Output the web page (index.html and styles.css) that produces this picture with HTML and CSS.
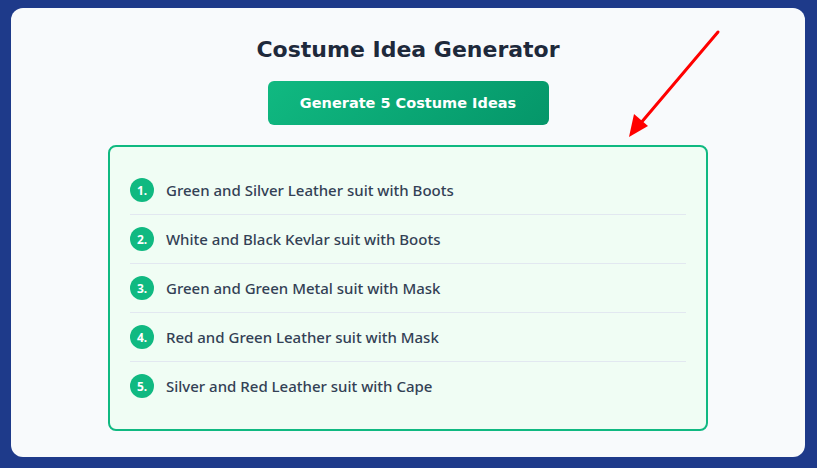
FILE: index.html
```html
<!DOCTYPE html>
<html lang="en">
<head>
<meta charset="utf-8">
<title>Costume Idea Generator</title>
<link rel="stylesheet" href="styles.css">
</head>
<body>
<main class="card">
  <h1 class="title">Costume Idea Generator</h1>
  <button class="generate">Generate 5 Costume Ideas</button>
  <ol class="ideas">
    <li class="idea"><span class="num">1.</span><span class="text">Green and Silver Leather suit with Boots</span></li>
    <li class="idea"><span class="num">2.</span><span class="text">White and Black Kevlar suit with Boots</span></li>
    <li class="idea"><span class="num">3.</span><span class="text">Green and Green Metal suit with Mask</span></li>
    <li class="idea"><span class="num">4.</span><span class="text">Red and Green Leather suit with Mask</span></li>
    <li class="idea"><span class="num">5.</span><span class="text">Silver and Red Leather suit with Cape</span></li>
  </ol>
</main>
<svg class="arrow" width="817" height="468" viewBox="0 0 817 468" aria-hidden="true">
  <line x1="718" y1="32" x2="640" y2="124" stroke="#ff0000" stroke-width="3" stroke-linecap="round"/>
  <polygon points="629,137 634,114 648,126" fill="#ff0000"/>
</svg>
</body>
</html>
```
FILE: styles.css
```css
html, body {
  margin: 0;
  padding: 0;
}
body {
  background: #1e3a8a;
  padding: 8px 12px 11px 11px;
  width: 817px;
  height: 468px;
  box-sizing: border-box;
  position: relative;
  overflow: hidden;
}
.card {
  background: #f8fafc;
  border-radius: 12px;
  height: 449px;
  box-sizing: border-box;
  padding: 24px 0 0;
  display: flex;
  flex-direction: column;
  align-items: center;
}
.title {
  margin: 0;
  font-family: "DejaVu Sans", sans-serif;
  font-weight: 700;
  font-size: 22px;
  line-height: 36px;
  color: #1e293b;
}
.generate {
  margin-top: 13px;
  width: 281px;
  height: 44px;
  border: none;
  border-radius: 6px;
  background: linear-gradient(135deg, #10b981, #059669);
  color: #ffffff;
  font-family: "DejaVu Sans", sans-serif;
  font-weight: 700;
  font-size: 14.5px;
  padding: 0;
}
.ideas {
  list-style: none;
  margin: 20px 0 0;
  width: 600px;
  box-sizing: border-box;
  border: 2px solid #10b981;
  border-radius: 8px;
  background: #f0fdf4;
  padding: 19px 20px;
}
.idea {
  display: flex;
  align-items: center;
  gap: 12px;
  height: 48px;
  border-bottom: 1px solid #e2e8f0;
}
.idea:last-child {
  border-bottom: none;
}
.num {
  width: 24px;
  height: 24px;
  border-radius: 50%;
  background: #10b981;
  color: #ffffff;
  display: flex;
  align-items: center;
  justify-content: center;
  font-family: "Noto Sans", sans-serif;
  font-weight: 700;
  font-size: 12px;
  flex: none;
}
.text {
  font-family: "Noto Sans", sans-serif;
  font-weight: 500;
  font-size: 15px;
  color: #334155;
}
.arrow {
  position: absolute;
  left: 0;
  top: 0;
  pointer-events: none;
}
```
